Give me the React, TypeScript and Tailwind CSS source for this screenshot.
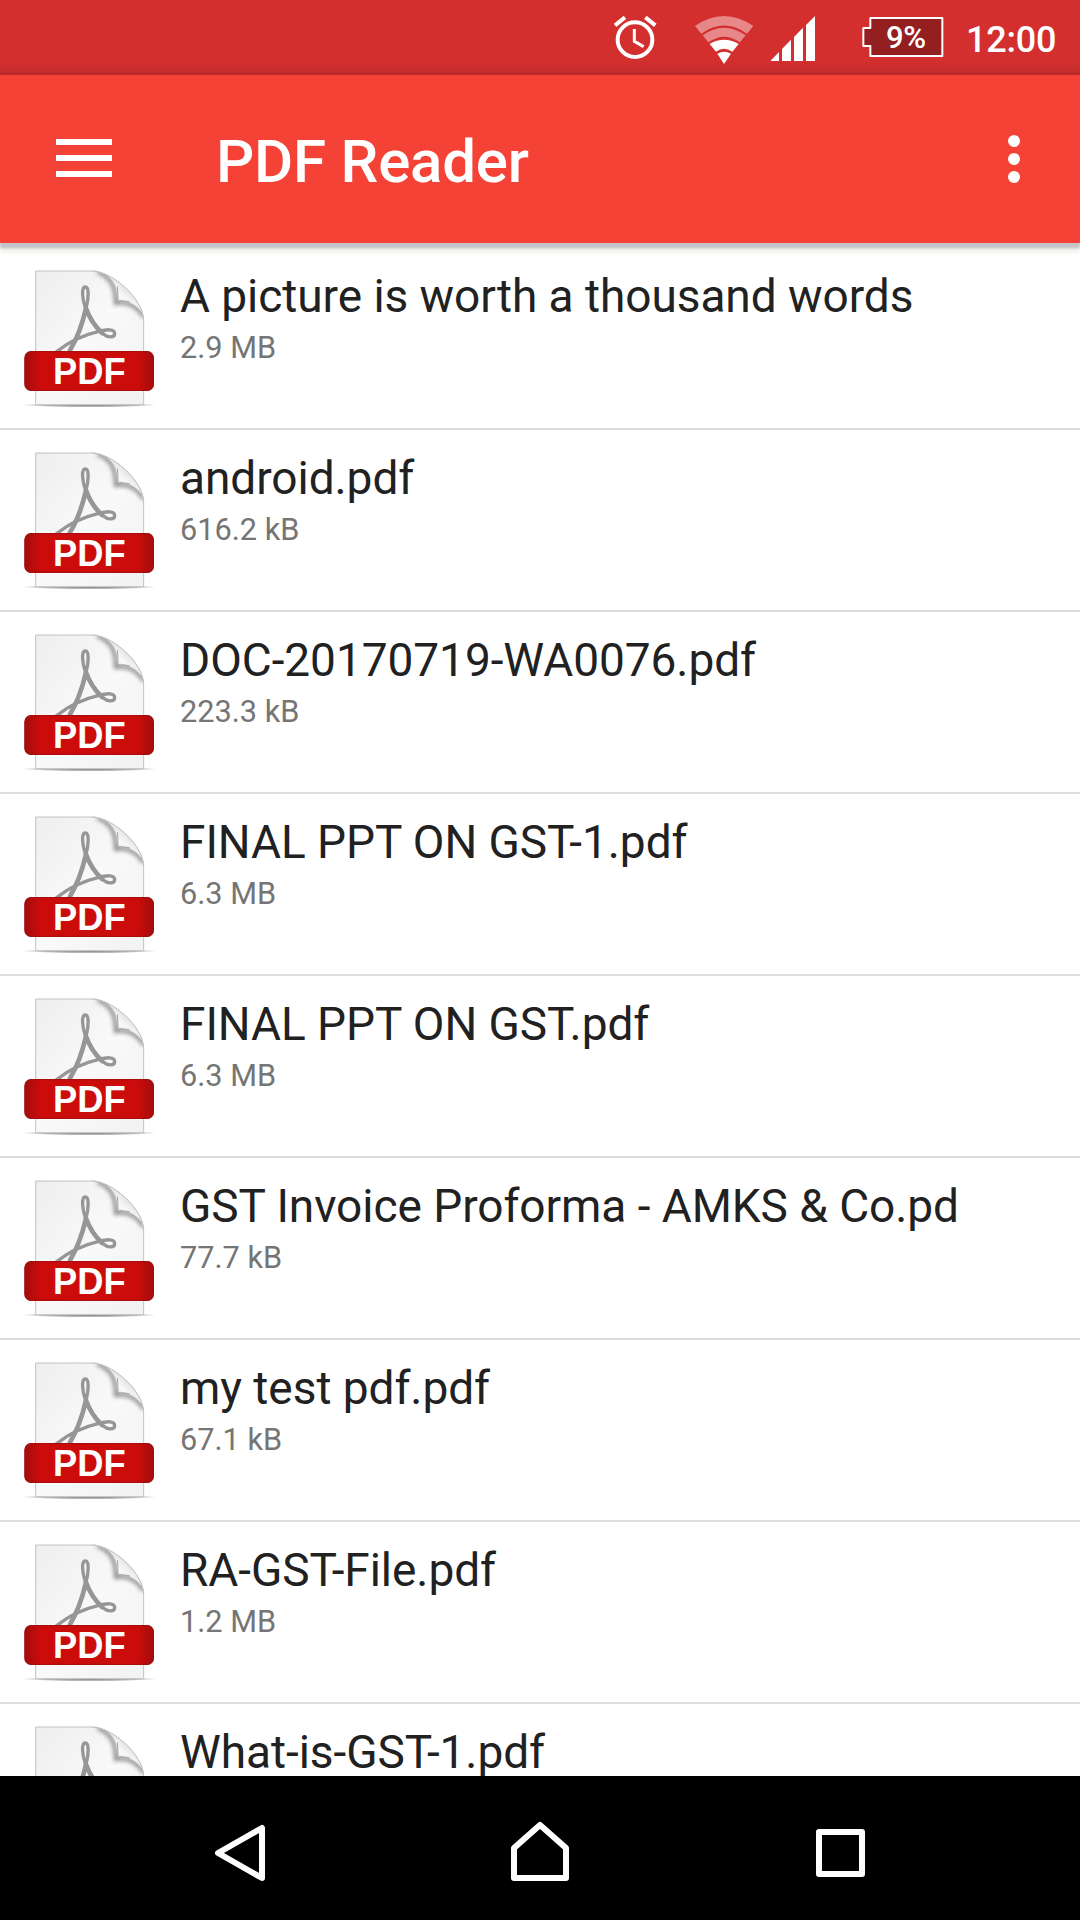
interface PdfFile {
  name: string;
  size?: string;
}

const FILES: PdfFile[] = [
  { name: "A picture is worth a thousand words", size: "2.9 MB" },
  { name: "android.pdf", size: "616.2 kB" },
  { name: "DOC-20170719-WA0076.pdf", size: "223.3 kB" },
  { name: "FINAL PPT ON GST-1.pdf", size: "6.3 MB" },
  { name: "FINAL PPT ON GST.pdf", size: "6.3 MB" },
  { name: "GST Invoice Proforma - AMKS & Co.pd", size: "77.7 kB" },
  { name: "my test pdf.pdf", size: "67.1 kB" },
  { name: "RA-GST-File.pdf", size: "1.2 MB" },
  { name: "What-is-GST-1.pdf" },
];

function AlarmIcon() {
  return (
    <svg viewBox="70 42 132 138" className="w-[44px] h-[46px]" fill="none" stroke="#fff">
      <circle cx="136" cy="119" r="52" strokeWidth="12" />
      <path d="M134 87v37l28 16" strokeWidth="9" />
      <path d="M76 76l30-24M197 76l-30-24" strokeWidth="12" />
    </svg>
  );
}

function WifiIcon() {
  return (
    <svg viewBox="312 42 180 153" className="w-[60px] h-[51px]">
      <path d="M315 78Q402 18 490 78L471 101Q402 52 334 101Z" fill="#e88787" />
      <path d="M338 106Q402 60 467 106L450 127Q402 93 355 127Z" fill="#e88787" />
      <path d="M359 132Q402 107 446 132L427 155Q402 137 378 155Z" fill="#fff" />
      <path d="M382 161Q402 149 423 161L402 192Z" fill="#fff" />
    </svg>
  );
}

function SignalIcon() {
  return (
    <svg viewBox="540 45 138 141" className="w-[46px] h-[47px]" fill="#fff">
      <path d="M541 183L567 156V183ZM576 147L603 119V183H576ZM612 111L639 83V183H612ZM648 75L675 48V183H648Z" />
    </svg>
  );
}

function BatteryIcon() {
  return (
    <div className="relative w-[82px] h-[42px]">
      <svg viewBox="95 48 246 126" className="w-[82px] h-[42px]">
        <path
          d="M120 54H336V168H120V138H99V84H120Z"
          fill="#931f21"
          stroke="#fff"
          strokeWidth="6"
          strokeLinejoin="round"
        />
      </svg>
      <span className="absolute left-[24px] top-[5px] text-[31px] leading-[34px] tracking-[-0.4px] font-medium text-white">9%</span>
    </div>
  );
}

function StatusBar() {
  return (
    <div className="h-[75px] shrink-0 flex items-start bg-[linear-gradient(#d32f2f_0,#d32f2f_60px,#cb2d2d_69px,#b52a28_75px)]">
      <div className="ml-[613px] mt-[14px]"><AlarmIcon /></div>
      <div className="ml-[37px] mt-[14px]"><WifiIcon /></div>
      <div className="ml-[16px] mt-[15px]"><SignalIcon /></div>
      <div className="ml-[46px] mt-[16px]"><BatteryIcon /></div>
      <span className="ml-[22px] mt-[19px] text-[36px] leading-[42px] tracking-[-0.2px] font-medium text-white">12:00</span>
    </div>
  );
}

function AppBar() {
  return (
    <div className="relative z-10 h-[168px] shrink-0 flex items-start bg-[#f44336] shadow-[0_5px_2px_#c3c3c8,0_8px_6px_#e6e6e2]">
      <button className="ml-[56px] mt-[64px] flex flex-col gap-[10px]" aria-label="Menu">
        {[0, 1, 2].map((i) => (
          <span key={i} className="block w-[56px] h-[6px] bg-white" />
        ))}
      </button>
      <h1 className="ml-[104px] mt-[52px] text-[60px] leading-[70px] tracking-[-0.2px] font-medium text-white">PDF Reader</h1>
      <button className="ml-auto mr-[60px] mt-[60px] flex flex-col gap-[6px]" aria-label="More options">
        {[0, 1, 2].map((i) => (
          <span key={i} className="block size-[12px] rounded-full bg-white" />
        ))}
      </button>
    </div>
  );
}

function PdfIcon() {
  return (
    <svg viewBox="0 0 480 480" className="size-[160px] shrink-0">
      <defs>
        <linearGradient id="page" x1="0" y1="0" x2="1" y2="1">
          <stop offset="0" stopColor="#eeeeee" />
          <stop offset="0.5" stopColor="#f9f9f9" />
          <stop offset="1" stopColor="#f2f2f2" />
        </linearGradient>
        <linearGradient id="fold" x1="320" y1="142" x2="356" y2="104" gradientUnits="userSpaceOnUse">
          <stop offset="0" stopColor="#d4d4d4" />
          <stop offset="0.4" stopColor="#fafafa" />
          <stop offset="1" stopColor="#e4e4e4" />
        </linearGradient>
        <linearGradient id="band" x1="0" x2="1" y1="0" y2="0">
          <stop offset="0" stopColor="#a30c0c" />
          <stop offset="0.13" stopColor="#cc0c0b" />
          <stop offset="0.87" stopColor="#cc0c0b" />
          <stop offset="1" stopColor="#a30c0c" />
        </linearGradient>
        <radialGradient id="ground">
          <stop offset="0" stopColor="#777" />
          <stop offset="0.7" stopColor="#999" stopOpacity="0.7" />
          <stop offset="1" stopColor="#bbb" stopOpacity="0" />
        </radialGradient>
        <filter id="soft" x="-30%" y="-30%" width="160%" height="160%">
          <feGaussianBlur stdDeviation="6" />
        </filter>
        <clipPath id="sheet">
          <path d="M77 48H246C304 48 401 130 401 198V450H77Z" />
        </clipPath>
      </defs>
      <ellipse cx="238" cy="450" rx="205" ry="7" fill="url(#ground)" />
      <path d="M77 48H246C304 48 401 130 401 198V449H77Z" fill="url(#page)" stroke="#c2c2c2" strokeWidth="3" />
      <g clipPath="url(#sheet)">
        <path
          d="M262 50C302 66 318 92 318 144C350 138 382 152 402 186"
          fill="none"
          stroke="#8a8a8a"
          strokeWidth="12"
          filter="url(#soft)"
        />
        <path d="M266 46C308 66 326 92 323 138C352 134 378 144 402 180V46Z" fill="url(#fold)" />
      </g>
      <path d="M322 94Q325 112 323 138Q340 135 360 141" fill="none" stroke="#a2a2a2" strokeWidth="3" />
      <path d="M246 48C304 48 401 130 401 198" fill="none" stroke="#c4c4c4" strokeWidth="3" />
      {/* Acrobat loop */}
      <g fill="none" stroke="#969696" strokeLinecap="round" strokeLinejoin="round">
        <path
          d="M176 292C202 252 218 206 228 160C236 130 238 96 226 96C213 96 217 132 226 158C240 194 258 218 280 237C293 249 314 248 314 236C314 220 290 223 264 230C220 240 180 258 140 290"
          strokeWidth="10"
        />
        <path d="M180 286C202 250 216 212 228 160C240 194 254 214 276 234" strokeWidth="14" />
      </g>
      <rect x="43" y="288" width="389" height="120" rx="21" fill="url(#band)" />
      <rect x="45" y="290" width="385" height="116" rx="19" fill="none" stroke="#9b1111" strokeWidth="4" opacity="0.7" />
      <text
        x="129"
        y="388"
        fontSize="109"
        fontWeight="700"
        fill="#fff"
        className="font-['Liberation_Sans',Arial,sans-serif]"
      >
        PDF
      </text>
    </svg>
  );
}

function FileRow({ file }: { file: PdfFile }) {
  return (
    <li className="h-[182px] shrink-0 flex items-start pl-[10px] pt-[7px] border-b-2 border-[#dedede]">
      <PdfIcon />
      <div className="ml-[10px] mt-[13px] whitespace-nowrap">
        <p className="text-[46px] leading-[56px] tracking-[-0.05px] text-[#212121]">{file.name}</p>
        {file.size && <p className="text-[30.7px] leading-[36px] mt-[6px] text-[#757575]">{file.size}</p>}
      </div>
    </li>
  );
}

function NavBar() {
  return (
    <div className="h-[144px] shrink-0 flex items-center bg-black">
      <svg
        viewBox="0 0 1080 144"
        className="w-full h-[144px]"
        fill="none"
        stroke="#fff"
        strokeWidth="6"
        strokeLinejoin="round"
      >
        <path d="M218 77L262 52V102Z" />
        <path d="M514 102V72L540 49L566 72V102Z" />
        <path d="M819 56H862V98H819Z" />
      </svg>
    </div>
  );
}

export default function App() {
  return (
    <div className="w-[1080px] h-[1920px] flex flex-col overflow-hidden bg-white font-[Roboto,sans-serif]">
      <StatusBar />
      <AppBar />
      <ul className="flex-1 min-h-0 overflow-hidden flex flex-col pt-[5px]">
        {FILES.map((f) => (
          <FileRow key={f.name} file={f} />
        ))}
      </ul>
      <NavBar />
    </div>
  );
}
